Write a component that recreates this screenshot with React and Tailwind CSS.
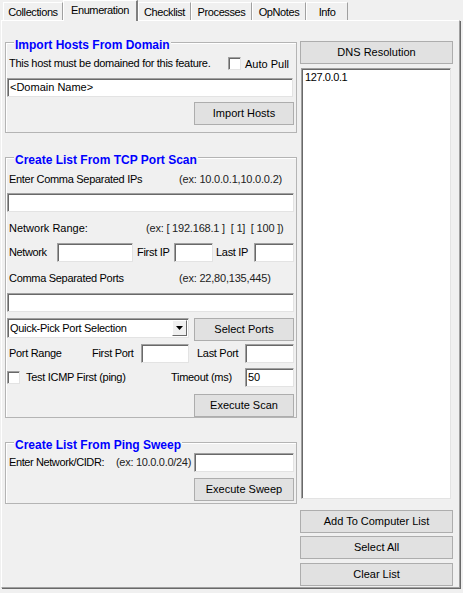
import React from 'react';

const field = "bg-white border border-t-[#a0a0a0] border-l-[#a0a0a0] border-r-[#e3e3e3] border-b-[#e3e3e3] shadow-[inset_1px_1px_0_#696969]";

function Btn({ children, className }) {
    return (
        <div className={`h-[23px] w-[100px] bg-[#e1e1e1] border border-[#adadad] text-[11px] text-black flex items-center justify-center ${className}`}>
            {children}
        </div>
    );
}

function Check() {
    return <div className={`w-[13px] h-[13px] shrink-0 ${field}`} />;
}

function Group({ title, className, children }) {
    return (
        <div className={`relative border border-[#b4b4b4] shadow-[inset_1px_1px_0_#ffffff] ${className}`}>
            <div className="absolute left-[8px] -top-[5px] px-[1px] bg-[#f0f0f0] text-[12px] leading-[14px] font-bold text-[#0000ff]">
                {title}
            </div>
            {children}
        </div>
    );
}

const tabs = [
    { name: 'Collections', w: 'w-[60px]' },
    { name: 'Enumeration', w: 'w-[75px]', active: true },
    { name: 'Checklist', w: 'w-[53px]' },
    { name: 'Processes', w: 'w-[61px]' },
    { name: 'OpNotes', w: 'w-[54px]' },
    { name: 'Info', w: 'w-[42px]' },
];

export default function App() {
    return (
        <div className="w-[463px] h-[593px] bg-[#f0f0f0] overflow-hidden font-['Liberation_Sans',Arial,sans-serif] text-[11px] text-black leading-[13px]">
            {/* tab strip */}
            <div className="flex items-end h-[20px] pl-[3px] relative z-10">
                {tabs.map(t => (
                    t.active ? (
                        <div key={t.name} className={`${t.w} h-[21px] -mb-px bg-[#f0f0f0] border-t border-l border-t-white border-l-white border-r-2 border-r-[#808080] flex justify-center pt-[3px] tracking-[-0.4px]`}>
                            {t.name}
                        </div>
                    ) : (
                        <div key={t.name} className={`${t.w} h-[18px] mb-0 bg-[#f0f0f0] border-t border-l border-t-white border-l-white border-r border-r-[#a0a0a0] flex justify-center pt-[3px] tracking-[-0.4px]`}>
                            {t.name}
                        </div>
                    )
                ))}
            </div>

            {/* tab page */}
            <div className="ml-[1px] w-[459px] h-[568px] border-t border-l border-t-white border-l-white border-r border-b border-r-[#a0a0a0] border-b-[#a0a0a0] shadow-[1px_1px_0_#696969] flex pl-[3px]">
                {/* left column */}
                <div className="w-[292px] flex flex-col">
                    <Group title="Import Hosts From Domain" className="h-[91px] mt-[21px]">
                        <div className="flex items-center h-[14px] mt-[13px] pl-[3px]">
                            <span className="w-[219px] tracking-[-0.3px]">This host must be domained for this feature.</span>
                            <Check />
                            <span className="ml-[4px] mt-[2px]">Auto Pull</span>
                        </div>
                        <div className={`${field} ml-[1px] mt-[8px] w-[286px] h-[19px] flex items-center pl-[2px]`}>&lt;Domain Name&gt;</div>
                        <Btn className="ml-[188px] mt-[5px]">Import Hosts</Btn>
                    </Group>

                    <Group title="Create List From TCP Port Scan" className="h-[261px] mt-[24px]">
                        <div className="flex items-center h-[14px] mt-[14px] pl-[3px]">
                            <span className="w-[170px] tracking-[-0.3px]">Enter Comma Separated IPs</span>
                            <span className="text-[#222] tracking-[-0.2px]">(ex: 10.0.0.1,10.0.0.2)</span>
                        </div>
                        <div className={`${field} ml-[1px] mt-[7px] w-[287px] h-[19px]`} />
                        <div className="flex items-center h-[14px] mt-[9px] pl-[3px]">
                            <span className="w-[137px]">Network Range:</span>
                            <span className="text-[#222] whitespace-pre tracking-[-0.2px]">(ex: [ 192.168.1 ]  [ 1]  [ 100 ])</span>
                        </div>
                        <div className="flex items-center h-[19px] mt-[8px] pl-[3px]">
                            <span className="w-[48px] tracking-[-0.4px]">Network</span>
                            <div className={`${field} w-[76px] h-[19px]`} />
                            <span className="ml-[4px] w-[37px] tracking-[-0.3px]">First IP</span>
                            <div className={`${field} w-[39px] h-[19px]`} />
                            <span className="ml-[3px] w-[38px] tracking-[-0.3px]">Last IP</span>
                            <div className={`${field} w-[40px] h-[19px]`} />
                        </div>
                        <div className="flex items-center h-[14px] mt-[9px] pl-[3px]">
                            <span className="w-[170px] tracking-[-0.3px]">Comma Separated Ports</span>
                            <span className="text-[#222] tracking-[-0.2px]">(ex: 22,80,135,445)</span>
                        </div>
                        <div className={`${field} ml-[1px] mt-[8px] w-[287px] h-[19px]`} />
                        <div className="flex items-start mt-[6px] ml-[1px]">
                            <div className={`${field} w-[182px] h-[20px] flex items-center pl-[2px] pr-[1px]`}>
                                <span className="grow tracking-[-0.3px]">Quick-Pick Port Selection</span>
                                <div className="w-[15px] h-[16px] bg-[#f0f0f0] border border-t-white border-l-white border-r-[#696969] border-b-[#696969] flex items-center justify-center">
                                    <svg width="7" height="4" viewBox="0 0 7 4"><path d="M0 0H7L3.5 4Z" fill="#000" /></svg>
                                </div>
                            </div>
                            <Btn className="ml-[5px] h-[22px]">Select Ports</Btn>
                        </div>
                        <div className="flex items-center h-[19px] mt-[3px] pl-[3px]">
                            <span className="w-[83px] tracking-[-0.3px]">Port Range</span>
                            <span className="w-[49px] tracking-[-0.3px]">First Port</span>
                            <div className={`${field} w-[48px] h-[19px]`} />
                            <span className="ml-[8px] w-[48px] tracking-[-0.3px]">Last Port</span>
                            <div className={`${field} w-[49px] h-[19px]`} />
                        </div>
                        <div className="flex items-center h-[19px] mt-[5px] pl-[1px]">
                            <Check />
                            <span className="ml-[6px] w-[145px] tracking-[-0.3px]">Test ICMP First (ping)</span>
                            <span className="w-[74px] tracking-[-0.3px]">Timeout (ms)</span>
                            <div className={`${field} w-[49px] h-[19px] flex items-center pl-[2px]`}>50</div>
                        </div>
                        <Btn className="ml-[188px] mt-[7px]">Execute Scan</Btn>
                    </Group>

                    <Group title="Create List From Ping Sweep" className="h-[62px] mt-[24px]">
                        <div className="flex items-center h-[19px] mt-[10px] pl-[3px]">
                            <span className="w-[107px] tracking-[-0.4px]">Enter Network/CIDR:</span>
                            <span className="w-[78px] text-[#222] tracking-[-0.3px]">(ex: 10.0.0.0/24)</span>
                            <div className={`${field} w-[100px] h-[19px]`} />
                        </div>
                        <Btn className="ml-[188px] mt-[6px] h-[22px]">Execute Sweep</Btn>
                    </Group>
                </div>

                {/* right column */}
                <div className="w-[153px] ml-[3px] flex flex-col">
                    <Btn className="mt-[20px] w-[153px] h-[22px]">DNS Resolution</Btn>
                    <div className={`${field} mt-[4px] ml-[1px] w-[150px] h-[431px] pl-[3px] pt-[2px] tracking-[-0.4px]`}>127.0.0.1</div>
                    <Btn className="mt-[11px] w-[153px]">Add To Computer List</Btn>
                    <Btn className="mt-[3px] w-[153px] h-[22px]">Select All</Btn>
                    <Btn className="mt-[4px] w-[153px] h-[22px]">Clear List</Btn>
                </div>
            </div>
        </div>
    );
}
